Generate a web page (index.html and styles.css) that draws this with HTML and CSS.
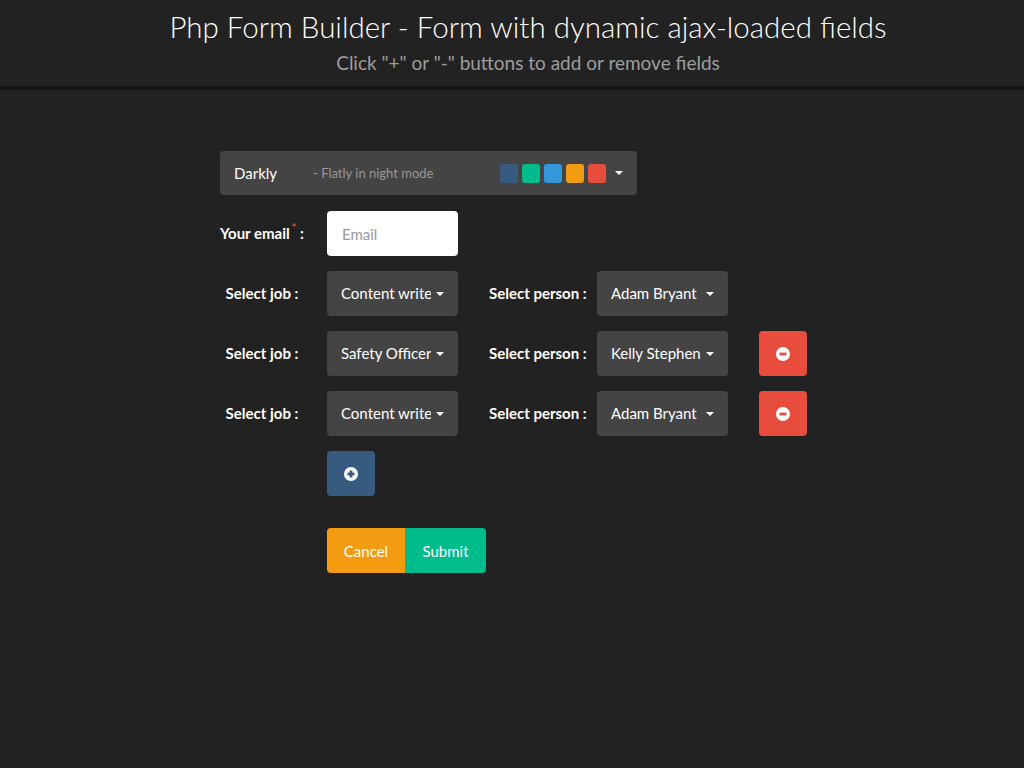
FILE: index.html
```html
<!DOCTYPE html>
<html lang="en">
<head>
    <meta charset="UTF-8">
    <meta name="viewport" content="width=device-width, initial-scale=1.0">
    <title>Php Form Builder - Form with dynamic ajax-loaded fields</title>
    <link rel="stylesheet" href="styles.css">
</head>
<body>
    <header class="page-header">
        <h1>Php Form Builder - Form with dynamic ajax-loaded fields</h1>
        <p class="lead">Click "+" or "-" buttons to add or remove fields</p>
    </header>

    <div class="container">
        <div class="theme-bar">
            <span class="theme-name">Darkly</span>
            <span class="theme-desc">- Flatly in night mode</span>
            <span class="swatches">
                <span class="swatch" style="background:#375a7f"></span>
                <span class="swatch" style="background:#00bc8c"></span>
                <span class="swatch" style="background:#3498db"></span>
                <span class="swatch" style="background:#f39c12"></span>
                <span class="swatch" style="background:#e74c3c"></span>
            </span>
            <span class="caret"></span>
        </div>

        <form class="dyn-form">
            <div class="form-row">
                <label class="label-main">Your email<sup class="req">*</sup> :</label>
                <input class="input-email" type="text" placeholder="Email">
            </div>

            <div class="form-row">
                <label class="label-main">Select job :</label>
                <div class="fake-select job"><span class="val">Content writer</span><span class="caret"></span></div>
                <label class="label-person">Select person :</label>
                <div class="fake-select person"><span class="val">Adam Bryant</span><span class="caret"></span></div>
            </div>

            <div class="form-row">
                <label class="label-main">Select job :</label>
                <div class="fake-select job"><span class="val">Safety Officer</span><span class="caret"></span></div>
                <label class="label-person">Select person :</label>
                <div class="fake-select person"><span class="val">Kelly Stephen</span><span class="caret"></span></div>
                <button type="button" class="btn btn-remove">
                    <svg width="14" height="14" viewBox="0 0 14 14"><circle cx="7" cy="7" r="7" fill="#fff"/><rect x="3.5" y="5.6" width="7" height="2.8" fill="#e74c3c"/></svg>
                </button>
            </div>

            <div class="form-row">
                <label class="label-main">Select job :</label>
                <div class="fake-select job"><span class="val">Content writer</span><span class="caret"></span></div>
                <label class="label-person">Select person :</label>
                <div class="fake-select person"><span class="val">Adam Bryant</span><span class="caret"></span></div>
                <button type="button" class="btn btn-remove">
                    <svg width="14" height="14" viewBox="0 0 14 14"><circle cx="7" cy="7" r="7" fill="#fff"/><rect x="3.5" y="5.6" width="7" height="2.8" fill="#e74c3c"/></svg>
                </button>
            </div>

            <div class="form-row offset">
                <button type="button" class="btn btn-add">
                    <svg width="14" height="14" viewBox="0 0 14 14"><circle cx="7" cy="7" r="7" fill="#fff"/><rect x="3.5" y="5.6" width="7" height="2.8" fill="#375a7f"/><rect x="5.6" y="3.5" width="2.8" height="7" fill="#375a7f"/></svg>
                </button>
            </div>

            <div class="form-row offset actions">
                <button type="button" class="btn btn-cancel">Cancel</button>
                <button type="button" class="btn btn-submit">Submit</button>
            </div>
        </form>
    </div>
</body>
</html>
```

FILE: styles.css
```css
body {
    margin: 0;
    background-color: #222;
    color: #fff;
    font-family: Lato, "Open Sans", sans-serif;
    font-size: 15px;
}

.page-header {
    text-align: center;
    height: 86px;
    padding-left: 32px;
    border-bottom: 4px solid #141414;
    box-sizing: content-box;
}

.page-header h1 {
    margin: 0;
    padding-top: 8px;
    font-size: 29.5px;
    font-weight: 300;
    line-height: 38px;
    color: #fff;
}

.page-header .lead {
    margin: 5px 0 0;
    font-size: 19px;
    line-height: 24px;
    color: #9d9d9d;
}

.container {
    width: 600px;
    margin: 61px 0 0 220px;
}

.theme-bar {
    display: flex;
    align-items: center;
    width: 417px;
    height: 44px;
    box-sizing: border-box;
    padding: 0 14px;
    background-color: #444;
    border-radius: 4px;
}

.theme-name {
    font-size: 15px;
    width: 79px;
}

.theme-desc {
    font-size: 13px;
    color: #999;
    flex: 1;
}

.swatches {
    display: flex;
    gap: 4px;
    margin-right: 9px;
}

.swatch {
    width: 18px;
    height: 19px;
    border-radius: 3px;
}

.caret {
    display: inline-block;
    flex-shrink: 0;
    width: 0;
    height: 0;
    border-top: 4px solid #fff;
    border-left: 4px solid transparent;
    border-right: 4px solid transparent;
}

.dyn-form {
    margin-top: 16px;
}

.form-row {
    display: flex;
    align-items: center;
    height: 45px;
    margin-bottom: 15px;
}

.form-row > * {
    flex-shrink: 0;
}

.form-row.offset {
    padding-left: 107px;
}

.form-row.actions {
    margin-top: 32px;
}

.label-main {
    width: 84px;
    margin-right: 23px;
    padding-bottom: 2px;
    text-align: center;
    font-size: 15px;
    font-weight: bold;
    white-space: nowrap;
}

.label-person {
    margin-left: 31px;
    width: 97px;
    margin-right: 11px;
    padding-bottom: 2px;
    font-size: 15px;
    font-weight: bold;
    white-space: nowrap;
}

.req {
    color: #e74c3c;
    font-size: 11px;
    vertical-align: 7px;
    line-height: 0;
    margin-left: 2px;
}

.input-email {
    width: 131px;
    height: 45px;
    box-sizing: border-box;
    padding: 0 15px;
    border: none;
    border-radius: 4px;
    background-color: #fff;
    font-family: inherit;
    font-size: 15px;
    color: #222;
}

.input-email::placeholder {
    color: #999;
}

.fake-select {
    display: flex;
    align-items: center;
    width: 131px;
    height: 45px;
    box-sizing: border-box;
    padding: 0 14px 2px;
    background-color: #444;
    border-radius: 4px;
    font-size: 15px;
}

.fake-select .val {
    flex: 1;
    overflow: hidden;
    white-space: nowrap;
}

.fake-select .caret {
    margin: 2px 0 0 5px;
}

.btn {
    display: inline-flex;
    align-items: center;
    justify-content: center;
    height: 45px;
    border: none;
    border-radius: 4px;
    color: #fff;
    font-family: inherit;
    font-size: 15px;
    cursor: pointer;
}

.btn-remove {
    width: 48px;
    margin-left: 31px;
    background-color: #e74c3c;
}

.btn-add {
    width: 48px;
    background-color: #375a7f;
}

.btn-cancel {
    width: 78px;
    background-color: #f39c12;
    border-radius: 4px 0 0 4px;
}

.btn-submit {
    width: 81px;
    background-color: #00bc8c;
    border-radius: 0 4px 4px 0;
}
```
